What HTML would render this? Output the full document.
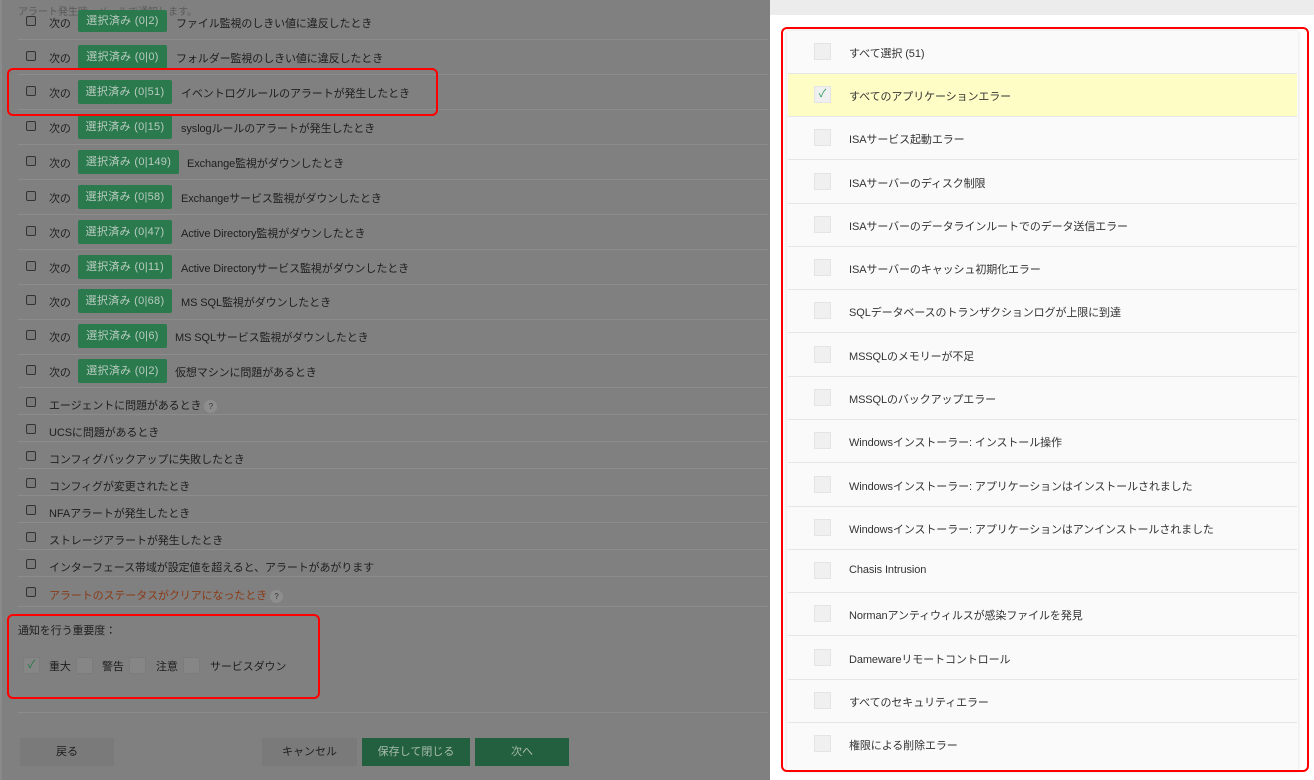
<!DOCTYPE html>
<html><head><meta charset="utf-8"><style>
*{box-sizing:border-box;margin:0;padding:0}
body{width:1314px;height:780px;overflow:hidden;background:#808080;font-family:"Liberation Sans","Noto Sans CJK JP",sans-serif;font-size:11px;color:#1e1e1e;position:relative}
.abs{position:absolute}
.cb{position:absolute;width:10px;height:10px;border:1px solid #333;border-radius:2px;background:#7a7a7a}
.row{position:absolute;left:18px;width:750px;border-bottom:1px solid #8c8c8c}
.btn{position:absolute;height:24px;background:#2a7a4e;color:#b9cbbf;border-radius:2px;line-height:24px;font-size:11px;text-align:center;letter-spacing:.3px}
.lbl{position:absolute;font-size:11px;letter-spacing:-0.1px}
.red{position:absolute;border:2px solid #f00;border-radius:6px}
.rr{position:absolute;left:788px;width:509px;height:43.3px;background:#fafafa;border-bottom:1px solid #e6e6e6}
.rr .c{position:absolute;left:26px;top:12px;width:17px;height:17px;background:#f0f0f0;border:1px solid #e4e4e4}
.rr span{position:absolute;left:61px;top:14px;font-size:11px;color:#333;letter-spacing:-0.1px}
.sq{position:absolute;top:657px;width:17px;height:17px;background:#868686;border:1px solid #7c7c7c}
</style></head><body>
<div class="abs" style="left:0;top:0;width:2px;height:780px;background:#8a8a8a"></div>
<div class="abs" style="left:18px;top:3px;color:#5a5a5a;font-size:10px">アラート発生時、メールで通知します。</div>

<div class="row" style="top:5px;height:35px"></div>
<div class="row" style="top:40px;height:35px"></div>
<div class="row" style="top:75px;height:35px"></div>
<div class="row" style="top:110px;height:35px"></div>
<div class="row" style="top:145px;height:35px"></div>
<div class="row" style="top:180px;height:35px"></div>
<div class="row" style="top:215px;height:35px"></div>
<div class="row" style="top:250px;height:35px"></div>
<div class="row" style="top:285px;height:35px"></div>
<div class="row" style="top:320px;height:35px"></div>
<div class="row" style="top:355px;height:33px"></div>

<div class="cb" style="left:26px;top:16px"></div><div class="lbl" style="left:49px;top:15px">次の</div><div class="btn" style="left:78px;top:10px;width:89px;height:22px;line-height:22px">選択済み (0|2)</div><div class="lbl" style="left:176px;top:15px">ファイル監視のしきい値に違反したとき</div>
<div class="cb" style="left:26px;top:51px"></div><div class="lbl" style="left:49px;top:50px">次の</div><div class="btn" style="left:78px;top:45px;width:89px">選択済み (0|0)</div><div class="lbl" style="left:176px;top:50px">フォルダー監視のしきい値に違反したとき</div>
<div class="cb" style="left:26px;top:86px"></div><div class="lbl" style="left:49px;top:85px">次の</div><div class="btn" style="left:78px;top:80px;width:94px">選択済み (0|51)</div><div class="lbl" style="left:181px;top:85px">イベントログルールのアラートが発生したとき</div>
<div class="cb" style="left:26px;top:121px"></div><div class="lbl" style="left:49px;top:120px">次の</div><div class="btn" style="left:78px;top:115px;width:94px">選択済み (0|15)</div><div class="lbl" style="left:181px;top:120px">syslogルールのアラートが発生したとき</div>
<div class="cb" style="left:26px;top:156px"></div><div class="lbl" style="left:49px;top:155px">次の</div><div class="btn" style="left:78px;top:150px;width:101px">選択済み (0|149)</div><div class="lbl" style="left:187px;top:155px">Exchange監視がダウンしたとき</div>
<div class="cb" style="left:26px;top:191px"></div><div class="lbl" style="left:49px;top:190px">次の</div><div class="btn" style="left:78px;top:185px;width:94px">選択済み (0|58)</div><div class="lbl" style="left:181px;top:190px">Exchangeサービス監視がダウンしたとき</div>
<div class="cb" style="left:26px;top:226px"></div><div class="lbl" style="left:49px;top:225px">次の</div><div class="btn" style="left:78px;top:220px;width:94px">選択済み (0|47)</div><div class="lbl" style="left:181px;top:225px">Active Directory監視がダウンしたとき</div>
<div class="cb" style="left:26px;top:261px"></div><div class="lbl" style="left:49px;top:260px">次の</div><div class="btn" style="left:78px;top:255px;width:94px">選択済み (0|11)</div><div class="lbl" style="left:181px;top:260px">Active Directoryサービス監視がダウンしたとき</div>
<div class="cb" style="left:26px;top:295px"></div><div class="lbl" style="left:49px;top:294px">次の</div><div class="btn" style="left:78px;top:289px;width:94px">選択済み (0|68)</div><div class="lbl" style="left:181px;top:294px">MS SQL監視がダウンしたとき</div>
<div class="cb" style="left:26px;top:330px"></div><div class="lbl" style="left:49px;top:329px">次の</div><div class="btn" style="left:78px;top:324px;width:89px">選択済み (0|6)</div><div class="lbl" style="left:175px;top:329px">MS SQLサービス監視がダウンしたとき</div>
<div class="cb" style="left:26px;top:365px"></div><div class="lbl" style="left:49px;top:364px">次の</div><div class="btn" style="left:78px;top:359px;width:89px">選択済み (0|2)</div><div class="lbl" style="left:175px;top:364px">仮想マシンに問題があるとき</div>

<div class="row" style="top:388px;height:27px"></div>
<div class="row" style="top:415px;height:27px"></div>
<div class="row" style="top:442px;height:27px"></div>
<div class="row" style="top:469px;height:27px"></div>
<div class="row" style="top:496px;height:27px"></div>
<div class="row" style="top:523px;height:27px"></div>
<div class="row" style="top:550px;height:27px"></div>
<div class="row" style="top:577px;height:30px"></div>
<div class="cb" style="left:26px;top:397px"></div><div class="lbl" style="left:49px;top:397px">エージェントに問題があるとき <span style="display:inline-block;width:13px;height:13px;border-radius:50%;background:#8e8e8e;font-size:8px;text-align:center;line-height:13px;color:#333">?</span></div>
<div class="cb" style="left:26px;top:424px"></div><div class="lbl" style="left:49px;top:424px">UCSに問題があるとき</div>
<div class="cb" style="left:26px;top:451px"></div><div class="lbl" style="left:49px;top:451px">コンフィグバックアップに失敗したとき</div>
<div class="cb" style="left:26px;top:478px"></div><div class="lbl" style="left:49px;top:478px">コンフィグが変更されたとき</div>
<div class="cb" style="left:26px;top:505px"></div><div class="lbl" style="left:49px;top:505px">NFAアラートが発生したとき</div>
<div class="cb" style="left:26px;top:532px"></div><div class="lbl" style="left:49px;top:532px">ストレージアラートが発生したとき</div>
<div class="cb" style="left:26px;top:559px"></div><div class="lbl" style="left:49px;top:559px">インターフェース帯域が設定値を超えると、アラートがあがります</div>
<div class="cb" style="left:26px;top:587px"></div><div class="lbl" style="left:49px;top:587px;color:#8a3a16">アラートのステータスがクリアになったとき <span style="display:inline-block;width:13px;height:13px;border-radius:50%;background:#8e8e8e;font-size:8px;text-align:center;line-height:13px;color:#333">?</span></div>

<div class="lbl" style="left:18px;top:622px">通知を行う重要度：</div>
<div class="sq" style="left:23px;color:#1f7a45;font-size:11px;text-align:center;line-height:15px">✓</div>
<div class="lbl" style="left:49px;top:658px">重大</div>
<div class="sq" style="left:76px"></div>
<div class="lbl" style="left:102px;top:658px">警告</div>
<div class="sq" style="left:129px"></div>
<div class="lbl" style="left:156px;top:658px">注意</div>
<div class="sq" style="left:183px"></div>
<div class="lbl" style="left:210px;top:658px">サービスダウン</div>
<div class="abs" style="left:18px;top:712px;width:750px;height:1px;background:#8c8c8c"></div>

<div class="abs" style="left:20px;top:738px;width:94px;height:28px;background:#7a7a7a;text-align:center;line-height:28px">戻る</div>
<div class="abs" style="left:262px;top:738px;width:95px;height:28px;background:#7a7a7a;text-align:center;line-height:28px">キャンセル</div>
<div class="abs" style="left:362px;top:738px;width:108px;height:28px;background:#23603f;color:#a9bcae;text-align:center;line-height:28px">保存して閉じる</div>
<div class="abs" style="left:475px;top:738px;width:94px;height:28px;background:#23603f;color:#a9bcae;text-align:center;line-height:28px">次へ</div>

<div class="red" style="left:7px;top:68px;width:431px;height:48px"></div>
<div class="red" style="left:7px;top:614px;width:313px;height:85px"></div>

<div class="abs" style="left:770px;top:0;width:544px;height:780px;background:#fff"></div>
<div class="abs" style="left:770px;top:0;width:544px;height:15px;background:#ececec"></div>
<div class="abs" style="left:787px;top:31px;width:511px;height:740px;background:#fafafa;box-shadow:0 0 4px rgba(0,0,0,.15)"></div>
<div class="rr" style="top:31px"><div class="c"></div><span>すべて選択 (51)</span></div>
<div class="rr" style="top:74px;background:#fefdc5"><div class="c" style="text-align:center;line-height:15px;color:#2f9a5a">✓</div><span>すべてのアプリケーションエラー</span></div>
<div class="rr" style="top:117px"><div class="c"></div><span>ISAサービス起動エラー</span></div>
<div class="rr" style="top:160.5px"><div class="c"></div><span>ISAサーバーのディスク制限</span></div>
<div class="rr" style="top:204px"><div class="c"></div><span>ISAサーバーのデータラインルートでのデータ送信エラー</span></div>
<div class="rr" style="top:247px"><div class="c"></div><span>ISAサーバーのキャッシュ初期化エラー</span></div>
<div class="rr" style="top:290px"><div class="c"></div><span>SQLデータベースのトランザクションログが上限に到達</span></div>
<div class="rr" style="top:333.5px"><div class="c"></div><span>MSSQLのメモリーが不足</span></div>
<div class="rr" style="top:377px"><div class="c"></div><span>MSSQLのバックアップエラー</span></div>
<div class="rr" style="top:420px"><div class="c"></div><span>Windowsインストーラー: インストール操作</span></div>
<div class="rr" style="top:463.5px"><div class="c"></div><span>Windowsインストーラー: アプリケーションはインストールされました</span></div>
<div class="rr" style="top:507px"><div class="c"></div><span>Windowsインストーラー: アプリケーションはアンインストールされました</span></div>
<div class="rr" style="top:550px"><div class="c"></div><span>Chasis Intrusion</span></div>
<div class="rr" style="top:593px"><div class="c"></div><span>Normanアンティウィルスが感染ファイルを発見</span></div>
<div class="rr" style="top:636.5px"><div class="c"></div><span>Damewareリモートコントロール</span></div>
<div class="rr" style="top:680px"><div class="c"></div><span>すべてのセキュリティエラー</span></div>
<div class="rr" style="top:723px;border-bottom:none"><div class="c"></div><span>権限による削除エラー</span></div>
<div class="red" style="left:781px;top:27px;width:528px;height:745px"></div>
</body></html>
